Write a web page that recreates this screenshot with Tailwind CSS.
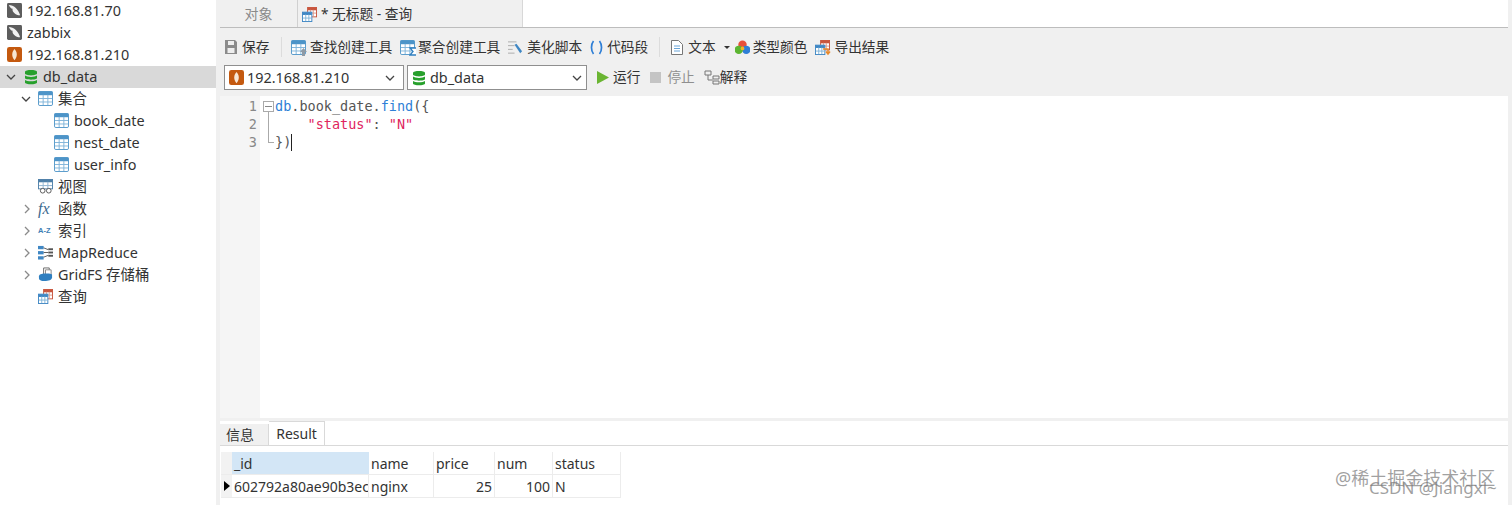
<!DOCTYPE html>
<html lang="zh-CN">
<head>
  <meta charset="UTF-8" />
  <title>无标题 - 查询</title>
  <script src="https://cdn.jsdelivr.net/npm/@tailwindcss/browser@4"></script>
</head>
<body class="w-[1512px] h-[505px] overflow-hidden bg-[#f0f0f0] text-[14.4px] text-[#333] font-['Noto_Sans','Noto_Sans_CJK_SC',sans-serif]">
<svg width="0" height="0" class="absolute">
  <defs>
    <symbol id="table" viewBox="0 0 16 16">
      <rect x="0.5" y="0.5" width="15" height="15" rx="1.5" fill="#fff" stroke="#4d94c8"/>
      <rect x="0.5" y="0.5" width="15" height="4" fill="#4d94c8"/>
      <path d="M5.5 4v11M10.5 4v11M1 8h14M1 11.7h14" stroke="#7fb3d9" fill="none"/>
    </symbol>
    <symbol id="db" viewBox="0 0 14 16">
      <path d="M1 2.800C1 .4 13 .4 13 2.800v1.800C13 7 1 7 1 4.600z" fill="#27a02c"/>
      <path d="M1 6.600C3 8.400 11 8.400 13 6.600v2.400C13 11.200 1 11.200 1 9z" fill="#27a02c"/>
      <path d="M1 11C3 12.800 11 12.800 13 11v2.400C13 15.800 1 15.800 1 13.400z" fill="#27a02c"/>
    </symbol>
    <symbol id="mongo" viewBox="0 0 16 16">
      <rect width="16" height="16" rx="2.500" fill="#c4590f"/>
      <path d="M8 2C5 5 4.500 10 8 14C11.500 10 11 5 8 2z" fill="#f7e6d4"/>
    </symbol>
    <symbol id="leaf" viewBox="0 0 16 16">
      <rect width="16" height="16" rx="1.500" fill="#5d5d5d"/>
      <path d="M2 2C7 2 12 6 14 13C9 13 5 9 6 6C4 6 3 4 2 2z" fill="#f2f2f2"/>
    </symbol>
    <symbol id="query" viewBox="0 0 16 16">
      <rect x="6" y="0.500" width="9.500" height="10" fill="#fff" stroke="#c8553d"/>
      <rect x="6" y="0.500" width="9.500" height="3" fill="#c8553d"/>
      <path d="M9 3v7M12 3v7M6 6.500h9" stroke="#dc9a8a"/>
      <rect x="0.500" y="5.500" width="10" height="10" fill="#fff" stroke="#3f87c4"/>
      <rect x="0.500" y="5.500" width="10" height="3" fill="#3f87c4"/>
      <path d="M4 8v7M7.300 8v7M1 11.800h9" stroke="#7fb3d9"/>
    </symbol>
    <symbol id="right" viewBox="0 0 10 10"><path d="M3 1l4 4-4 4" fill="none" stroke="#8a8a8a" stroke-width="1.300"/></symbol>
    <symbol id="down" viewBox="0 0 10 10"><path d="M1 3l4 4 4-4" fill="none" stroke="#444" stroke-width="1.300"/></symbol>
  </defs>
</svg>

<div class="flex h-full">
  <!-- object tree -->
  <aside class="w-[216px] shrink-0 bg-white leading-[22px] *:pb-[1px]">
    <div class="h-[22px] flex items-center pl-[7px] gap-[5px]"><svg class="w-[15px] h-[15px]"><use href="#leaf"/></svg>192.168.81.70</div>
    <div class="h-[22px] flex items-center pl-[7px] gap-[5px]"><svg class="w-[15px] h-[15px]"><use href="#leaf"/></svg>zabbix</div>
    <div class="h-[22px] flex items-center pl-[7px] gap-[5px]"><svg class="w-[15px] h-[15px]"><use href="#mongo"/></svg>192.168.81.210</div>
    <div class="h-[22px] flex items-center pl-[6px] bg-[#d9d9d9]"><svg class="w-[10px] h-[10px] mr-[8px]"><use href="#down"/></svg><svg class="w-[14px] h-[16px] mr-[5px]"><use href="#db"/></svg>db_data</div>
    <div class="h-[22px] flex items-center pl-[21px]"><svg class="w-[10px] h-[10px] mr-[7px]"><use href="#down"/></svg><svg class="w-[15px] h-[15px] mr-[5px]"><use href="#table"/></svg>集合</div>
    <div class="h-[22px] flex items-center pl-[54px]"><svg class="w-[15px] h-[15px] mr-[5px]"><use href="#table"/></svg>book_date</div>
    <div class="h-[22px] flex items-center pl-[54px]"><svg class="w-[15px] h-[15px] mr-[5px]"><use href="#table"/></svg>nest_date</div>
    <div class="h-[22px] flex items-center pl-[54px]"><svg class="w-[15px] h-[15px] mr-[5px]"><use href="#table"/></svg>user_info</div>
    <div class="h-[22px] flex items-center pl-[38px]">
      <svg class="w-[15px] h-[15px] mr-[5px]" viewBox="0 0 16 16"><rect x="0.500" y="0.500" width="15" height="10" fill="#fff" stroke="#4d7fa8"/><rect x="0.500" y="0.500" width="15" height="3" fill="#4d7fa8"/><path d="M5.500 3v7M10.500 3v7M1 7h14" stroke="#8fb4d2"/><circle cx="5" cy="12.500" r="2.500" fill="#fff" stroke="#555"/><circle cx="11.500" cy="12.500" r="2.500" fill="#fff" stroke="#555"/></svg>视图</div>
    <div class="h-[22px] flex items-center pl-[22px]"><svg class="w-[10px] h-[10px] mr-[6px]"><use href="#right"/></svg><span class="w-[15px] mr-[5px] font-['Liberation_Serif',serif] italic text-[16px] text-[#3d6a8f] leading-none">fx</span>函数</div>
    <div class="h-[22px] flex items-center pl-[22px]"><svg class="w-[10px] h-[10px] mr-[6px]"><use href="#right"/></svg><span class="w-[15px] mr-[5px] font-['Liberation_Sans',sans-serif] font-bold text-[7.5px] text-[#3f7fb5] leading-none whitespace-nowrap">A-Z</span>索引</div>
    <div class="h-[22px] flex items-center pl-[22px]"><svg class="w-[10px] h-[10px] mr-[6px]"><use href="#right"/></svg>
      <svg class="w-[15px] h-[15px] mr-[5px]" viewBox="0 0 16 16"><rect x="0" y="1" width="6" height="3.500" fill="#3f87c4"/><rect x="0" y="6.500" width="6" height="3.500" fill="#3f87c4"/><rect x="0" y="12" width="6" height="3.500" fill="#3f87c4"/><path d="M6 3l5 2M6 8h5M6 13l5-2" fill="none" stroke="#555"/><rect x="11" y="3.500" width="5" height="2" fill="#555"/><rect x="11" y="7" width="5" height="2" fill="#555"/><rect x="11" y="10.500" width="5" height="2" fill="#555"/></svg>MapReduce</div>
    <div class="h-[22px] flex items-center pl-[22px]"><svg class="w-[10px] h-[10px] mr-[6px]"><use href="#right"/></svg>
      <svg class="w-[15px] h-[15px] mr-[5px]" viewBox="0 0 16 16"><path d="M6 1h6v7H6z" fill="#fff" stroke="#666"/><path d="M8 3h6v6H8z" fill="#fff" stroke="#888"/><path d="M1 10c0-2 3-3 6-3s7 0 8 1v3c0 3-4 4-8 4s-6-1-6-3z" fill="#2f7fc0"/></svg>GridFS 存储桶</div>
    <div class="h-[22px] flex items-center pl-[38px]"><svg class="w-[15px] h-[15px] mr-[5px]"><use href="#query"/></svg>查询</div>
  </aside>

  <!-- main area -->
  <main class="ml-[4px] w-[1287px] flex-1 flex flex-col pr-[4px]">
    <!-- tabs -->
    <div class="h-[28px] flex bg-white border-b border-[#bdbdbd] shrink-0">
      <div class="w-[78px] flex items-center justify-center text-[#8a8a8a] bg-[#f0f0f0] border-r border-[#d0d0d0] text-[14px]">对象</div>
      <div class="w-[225px] flex items-center pl-[4px] pt-[1px] gap-[4px] bg-[#f0f0f0] border-r border-[#d8d8d8]"><svg class="w-[15px] h-[15px]"><use href="#query"/></svg><span class="text-[13.7px]">* 无标题 - 查询</span></div>
    </div>
    <!-- toolbar row 1 -->
    <div class="h-[37px] flex items-center pl-[5px] pt-[1px] shrink-0 text-[13.7px] whitespace-nowrap">
      <svg class="w-[12px] h-[14px] mr-[5px]" viewBox="0 0 12 14"><path d="M0 0h10l2 2v12H0z" fill="#8b8b8b"/><rect x="3" y="1" width="6" height="4" fill="#eee"/><rect x="2.500" y="8" width="7" height="5" fill="#eee"/></svg>
      <span class="w-[27.400px]">保存</span>
      <span class="w-px h-[20px] bg-[#dcdcdc] ml-[11.600px] mr-[9px]"></span>
      <span class="relative w-[15px] h-[15px] mr-[4px]"><svg class="w-[15px] h-[15px]"><use href="#table"/></svg><svg class="absolute right-[-1px] bottom-[-1px] w-[7px] h-[8px]" viewBox="0 0 7 8"><path d="M3.500 0L7 4H5v4H2V4H0z" fill="#8f9aa5"/></svg></span><span class="w-[82.200px]">查找创建工具</span>
      <span class="relative w-[15px] h-[15px] ml-[8px] mr-[3px]"><svg class="w-[15px] h-[15px]"><use href="#table"/></svg><svg class="absolute right-[-2px] bottom-[-1px] w-[8px] h-[9px]" viewBox="0 0 8 9"><path d="M7 1H1l3 3.500L1 8h6" fill="#fff" stroke="#2f7fc0" stroke-width="1.300"/></svg></span><span class="w-[82.200px]">聚合创建工具</span>
      <svg class="w-[15px] h-[15px] ml-[8px] mr-[4px]" viewBox="0 0 16 16"><path d="M0 2h9M0 6h7M0 10h5M0 14h7" stroke="#aaa"/><path d="M7 5l2-1 6 8-2 2z" fill="#3f87c4"/></svg><span class="w-[54.800px]">美化脚本</span>
      <svg class="w-[13px] h-[15px] ml-[8px] mr-[4px]" viewBox="0 0 13 15"><path d="M3.500 1C.8 4.500.8 10.500 3.500 14M9.500 1c2.700 3.500 2.700 9.500 0 13" fill="none" stroke="#2f7fd6" stroke-width="1.700"/></svg><span class="w-[41.100px]">代码段</span>
      <span class="w-px h-[20px] bg-[#dcdcdc] ml-[11px] mr-[11px]"></span>
      <svg class="w-[12px] h-[15px] mr-[5px]" viewBox="0 0 12 15"><path d="M.5.500h7l4 4v10H.5z" fill="#fff" stroke="#777"/><path d="M3 6h6M3 8.500h6M3 11h6" stroke="#6aa5d8"/></svg><span class="w-[27.400px]">文本</span>
      <span class="ml-[8px] mr-[5px] w-0 h-0 border-x-[3px] border-x-transparent border-t-[3px] border-t-[#333]"></span>
      <svg class="w-[15px] h-[15px] mr-[3px]" viewBox="0 0 16 16"><circle cx="8" cy="5" r="4.500" fill="#e8503a"/><circle cx="12" cy="10.500" r="4.500" fill="#2f7fd6"/><circle cx="4" cy="10.500" r="4.500" fill="#5cb531"/><circle cx="8" cy="9" r="2" fill="#f0b429"/></svg><span class="w-[54.800px]">类型颜色</span>
      <span class="relative w-[15px] h-[15px] ml-[8px] mr-[4px]"><svg class="w-[15px] h-[15px]"><use href="#query"/></svg><svg class="absolute right-[-1px] bottom-[-1px] w-[8px] h-[8px]" viewBox="0 0 8 8"><path d="M0 1h5v4M3 3.500L5 6l2-2.500" fill="none" stroke="#e8892b" stroke-width="1.500"/></svg></span><span>导出结果</span>
    </div>
    <!-- toolbar row 2 -->
    <div class="h-[31px] pl-[4px] shrink-0 text-[13.7px]">
      <div class="h-[25px] flex items-center">
        <div class="w-[180px] h-[25px] flex items-center bg-white border border-[#8f8f8f] pl-[4px] pr-[8px] gap-[3px] text-[14.400px]"><svg class="w-[15px] h-[15px]"><use href="#mongo"/></svg><span class="flex-1">192.168.81.210</span><svg class="w-[10px] h-[10px]"><use href="#down"/></svg></div>
        <div class="w-[180px] h-[25px] flex items-center bg-white border border-[#8f8f8f] ml-[3px] pl-[4px] pr-[4px] gap-[4px] text-[14.400px]"><svg class="w-[14px] h-[16px]"><use href="#db"/></svg><span class="flex-1">db_data</span><svg class="w-[10px] h-[10px]"><use href="#down"/></svg></div>
        <svg class="w-[12px] h-[13px] ml-[10px] mr-[4px]" viewBox="0 0 12 13"><path d="M0 0l12 6.500L0 13z" fill="#6ab532"/></svg><span class="w-[27.400px]">运行</span>
        <span class="w-[11px] h-[11px] bg-[#c4c4c4] ml-[10px] mr-[6px]"></span><span class="w-[27.400px] text-[#8f8f8f]">停止</span>
        <svg class="w-[16px] h-[15px] ml-[9px]" viewBox="0 0 16 15"><path d="M1 1h6v4H1zM9 6h6v3H9zM9 11h6v3H9zM4 5v5h5" fill="none" stroke="#777"/></svg><span>解释</span>
      </div>
    </div>
    <!-- editor -->
    <div class="h-[322px] flex shrink-0 bg-white font-['DejaVu_Sans_Mono','Liberation_Mono',monospace] text-[13.5px] leading-[18px]">
      <div class="w-[40px] bg-[#f5f5f5] pt-[1px] pr-[3px] text-right text-[#888]"><div>1</div><div>2</div><div>3</div></div>
      <div class="relative w-[15px]">
        <span class="absolute left-[3px] top-[5px] w-[11px] h-[11px] border border-[#aaa]"><span class="absolute left-[1px] top-[4px] w-[7px] h-px bg-[#888]"></span></span>
        <span class="absolute left-[8px] top-[16px] w-px h-[30px] bg-[#aaa]"></span>
        <span class="absolute left-[8px] top-[46px] w-[6px] h-px bg-[#aaa]"></span>
      </div>
      <div class="pt-[1px]">
        <div><span class="text-[#2f7fd6]">db</span><span class="text-[#555]">.book_date.</span><span class="text-[#2f7fd6]">find</span><span class="text-[#555]">({</span></div>
        <div class="whitespace-pre">    <span class="text-[#e0245e]">"status"</span><span class="text-[#555]">: </span><span class="text-[#e0245e]">"N"</span></div>
        <div class="flex items-center"><span class="text-[#555]">})</span><span class="w-px h-[17px] bg-[#222]"></span></div>
      </div>
    </div>
    <!-- result panel -->
    <div class="mt-[3px] flex-1 bg-white flex flex-col">
      <div class="h-[25px] flex border-b border-[#d9d9d9] shrink-0 bg-white">
        <div class="w-[49px] mt-[3px] pl-[6px] flex items-center bg-[#f0f0f0] border-r border-[#d9d9d9] text-[14px]">信息</div>
        <div class="w-[56px] flex items-center justify-center bg-white border-r border-t border-[#d9d9d9] text-[14px]">Result</div>
      </div>
      <div class="ml-[1px] mt-[6px] text-[14px] w-fit">
        <div class="flex h-[23px] border-b border-[#ececec] leading-[23px]">
          <div class="w-[11px] bg-[#f2f2f2]"></div>
          <div class="w-[137px] bg-[#d3e6f6] pl-[2px]">_id</div>
          <div class="w-[65px] pl-[2px] border-r border-[#ececec]">name</div>
          <div class="w-[61px] pl-[2px] border-r border-[#ececec]">price</div>
          <div class="w-[58px] pl-[2px] border-r border-[#ececec]">num</div>
          <div class="w-[68px] pl-[2px] border-r border-[#ececec]">status</div>
        </div>
        <div class="flex h-[23px] border-b border-[#ececec] leading-[23px]">
          <div class="w-[11px] bg-[#f2f2f2] flex items-center justify-center"><span class="w-0 h-0 border-y-[5px] border-y-transparent border-l-[6px] border-l-black"></span></div>
          <div class="w-[137px] pl-[2px] overflow-hidden whitespace-nowrap border-r border-[#ececec]">602792a80ae90b3ec</div>
          <div class="w-[65px] pl-[2px] border-r border-[#ececec]">nginx</div>
          <div class="w-[61px] pr-[2px] text-right border-r border-[#ececec]">25</div>
          <div class="w-[58px] pr-[2px] text-right border-r border-[#ececec]">100</div>
          <div class="w-[68px] pl-[2px] border-r border-[#ececec]">N</div>
        </div>
      </div>
    </div>
  </main>
</div>

<!-- image watermarks over the window -->
<div class="absolute left-[1335px] top-[466px] text-[18px] leading-[24px] text-[#777]/70 whitespace-nowrap">@稀土掘金技术社区</div>
<div class="absolute left-[1369px] top-[477px] text-[17px] leading-[22px] text-[#777]/70 whitespace-nowrap">CSDN @Jiangxl~</div>
</body>
</html>
